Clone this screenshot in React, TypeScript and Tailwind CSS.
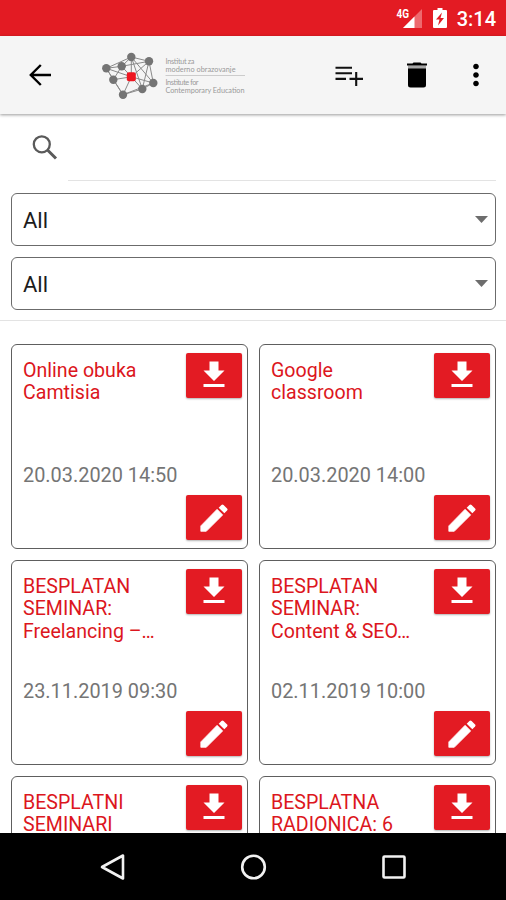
import React from 'react'
import { MdGetApp, MdMoreVert } from 'react-icons/md'

const seminars = [
  { title: ['Online obuka', 'Camtisia'], date: '20.03.2020 14:50' },
  { title: ['Google', 'classroom'], date: '20.03.2020 14:00' },
  { title: ['BESPLATAN', 'SEMINAR:', 'Freelancing –…'], date: '23.11.2019 09:30' },
  { title: ['BESPLATAN', 'SEMINAR:', 'Content & SEO…'], date: '02.11.2019 10:00' },
  { title: ['BESPLATNI', 'SEMINARI'], date: '' },
  { title: ['BESPLATNA', 'RADIONICA: 6'], date: '' },
]

const nodes = [
  [31.3, 10], [49, 14.3], [6.3, 21.3], [21.7, 19.3], [13.3, 32.7], [53.3, 36], [42.3, 42], [23, 47.7],
]

const links = [
  [0, 1], [0, 2], [0, 3], [2, 3], [2, 4], [3, 4], [4, 7], [7, 6], [6, 5], [5, 1], [7, 5], [0, 5], [1, 3], [2, 7], [0, 6], [1, 6],
]

const Logo = () => (
  <svg className='w-[150px] h-[56px] ml-[43px]' viewBox='0 0 150 56'>
    <g stroke='#8a8a8a' strokeWidth='1'>
      {links.map(([a, b], index: number) => (
        <line key={index} x1={nodes[a][0]} y1={nodes[a][1]} x2={nodes[b][0]} y2={nodes[b][1]} />
      ))}
      {nodes.map(([x, y], index: number) => (
        <line key={index} x1={x} y1={y} x2='31.3' y2='29.8' />
      ))}
    </g>
    {nodes.map(([x, y], index: number) => (
      <circle key={index} cx={x} cy={y} r='4.2' fill='#747474' />
    ))}
    <rect x='26.8' y='25.300' width='9' height='9' rx='2' fill='#ee1620' />
    <g fill='#9a9a9a' fontSize='7.3' fontFamily='Lato, sans-serif'>
      <text x='65.5' y='17.300' textLength='29'>Institut za</text>
      <text x='65.5' y='25.300' textLength='70'>moderno obrazovanje</text>
      <text x='65.5' y='37.700' textLength='33'>Institute for</text>
      <text x='65.5' y='46' textLength='79'>Contemporary Education</text>
    </g>
    <path d='M65.5 28.500H145' stroke='#cccccc' strokeWidth='1' />
  </svg>
)

const StatusBar = () => (
  <div className='flex items-center justify-end h-9 pr-[10px] bg-[#e31b23] text-white shrink-0'>
    <svg className='w-[27px] h-[22px]' viewBox='0 0 27 22'>
      <path d='M26 2V21H7z' fill='#fff' opacity='0.35' />
      <path d='M18.5 9.5V21H7z' fill='#fff' />
      <text x='0.5' y='11' fontSize='12.5' fontWeight='700' fontFamily='Roboto, sans-serif' fill='#fff' textLength='12.5' lengthAdjust='spacingAndGlyphs'>4G</text>
    </svg>
    <svg className='w-[14px] h-[22px] ml-[10px]' viewBox='0 0 14 22'>
      <path d='M4.5 1h5v2H13a1 1 0 0 1 1 1v16a1 1 0 0 1-1 1H1a1 1 0 0 1-1-1V4a1 1 0 0 1 1-1h3.500z' fill='#fff' />
      <path d='M9 5.500 3 12.500H6.500L5 18.500 11 11H7.500z' fill='#e31b23' />
    </svg>
    <span className='mt-0.5 ml-[10px] text-[20px] leading-9 font-medium'>3:14</span>
  </div>
)

const BackIcon = () => (
  <svg className='w-[34px] h-[34px] ml-[23px]' viewBox='0 0 34 34' fill='none' stroke='#000' strokeWidth='2.400'>
    <path d='M28 17H7.500M17.800 7 7.800 17l10 10' />
  </svg>
)

const AddIcon = () => (
  <svg className='w-[34px] h-[34px] ml-[82px]' viewBox='0 0 34 34' fill='none' stroke='#111' strokeWidth='2.100'>
    <path d='M3.500 9.800H20M3.500 15.300H20M3.500 20.900H14M17.500 20.900H31M24.200 14v14' />
  </svg>
)

const TrashIcon = () => (
  <svg className='w-[34px] h-[34px] ml-[34px]' viewBox='0 0 34 34'>
    <path d='M8 7.500h18v5H8z' fill='#a8a8a8' />
    <path d='M7 5.500h5.500L13.500 4.500h7l1 1H27V7.500H7zM8 10.500h18V27a2.500 2.500 0 0 1-2.500 2.500h-13A2.500 2.500 0 0 1 8 27z' fill='#000' />
  </svg>
)

const SearchIcon = () => (
  <svg className='w-[34px] h-[34px] mt-[17px]' viewBox='0 0 34 34' fill='none' stroke='#5a5a5a' strokeWidth='2.300'>
    <circle cx='13.800' cy='13.300' r='8' />
    <path d='M19.500 19 28 27.500' strokeWidth='3' />
  </svg>
)

const PencilIcon = () => (
  <svg className='w-9 h-9' viewBox='0 0 24 24' fill='#fff'>
    <path d='M3.200 17.250V20.900h3.650L17.810 9.940l-3.750-3.750z' stroke='#fff' strokeWidth='0.500' strokeLinejoin='round' />
    <path d='M20.710 7.040a1 1 0 0 0 0-1.410l-2.340-2.340a1 1 0 0 0-1.410 0l-1.830 1.830 3.750 3.750z' />
  </svg>
)

const Toolbar = () => (
  <div className='relative flex items-center h-[78px] bg-[#f5f5f5] shadow-[0_1px_3px_rgba(0,0,0,0.4)] text-black shrink-0'>
    <BackIcon />
    <Logo />
    <AddIcon />
    <TrashIcon />
    <MdMoreVert className='w-[34px] h-[34px] ml-[25px]' />
  </div>
)

const Dropdown = () => (
  <div className='flex items-center justify-between h-[53px] pl-[11px] pr-[7px] border border-[#6b6b6b] rounded-md text-[22px] text-[#1c1c1c]'>
    <span className='pt-0.5'>All</span>
    <svg className='w-[13px] h-[7px]' viewBox='0 0 13 7'>
      <path d='M0 0h13L6.500 7z' fill='#6d6d6d' />
    </svg>
  </div>
)

const SeminarCard = ({ item }: any) => (
  <div className='flex justify-between h-[205px] pl-[11px] pr-[5px] py-2 border border-[#5e5e5e] rounded-md'>
    <div className='flex flex-col whitespace-nowrap'>
      <div className='h-[111px] pt-[6.5px] text-[19.6px] leading-[22.5px] text-[#dc1620]'>
        {item.title.map((line: string) => (
          <p key={line}>{line}</p>
        ))}
      </div>
      <p className='text-[19.9px] leading-[24px] text-[#757575]'>{item.date}</p>
    </div>
    <div className='flex flex-col justify-between shrink-0 w-14 -ml-10'>
      <button className='flex items-center justify-center h-[45px] pb-[2px] rounded-[2px] bg-[#e31b23] text-white shadow-[0_1px_2px_rgba(0,0,0,0.3)]'>
        <MdGetApp className='w-9 h-9' />
      </button>
      <button className='flex items-center justify-center h-[45px] rounded-[2px] bg-[#e31b23] text-white shadow-[0_1px_2px_rgba(0,0,0,0.3)]'>
        <PencilIcon />
      </button>
    </div>
  </div>
)

const NavBar = () => (
  <div className='flex items-center justify-center gap-[112px] h-[67px] bg-black shrink-0'>
    <svg className='w-7 h-7' viewBox='0 0 28 28' fill='none' stroke='#f2f2f2' strokeWidth='2.600' strokeLinejoin='round'>
      <path d='M24 2.500v23L3 14z' />
    </svg>
    <svg className='w-7 h-7' viewBox='0 0 28 28' fill='none' stroke='#f2f2f2' strokeWidth='2.600'>
      <circle cx='14.500' cy='14' r='11.300' />
    </svg>
    <svg className='w-7 h-7' viewBox='0 0 28 28' fill='none' stroke='#f2f2f2' strokeWidth='2.600'>
      <rect x='4.500' y='3.500' width='21' height='21' rx='1' />
    </svg>
  </div>
)

export default function App() {
  return (
    <div className='flex flex-col w-[506px] h-[900px] overflow-hidden bg-white font-[Roboto,sans-serif]'>
      <StatusBar />
      <Toolbar />
      <div className='flex items-start h-[67px] pl-7 pr-[10px] shrink-0'>
        <SearchIcon />
        <div className='flex-1 h-[67px] ml-[6px] border-b border-[#e3e3e3]' />
      </div>
      <div className='flex flex-col gap-[11px] h-[140px] pt-3 pl-[11px] pr-[10px] border-b border-[#e3e3e3] shrink-0'>
        <Dropdown />
        <Dropdown />
      </div>
      <div className='flex-1 min-h-0 overflow-hidden'>
        <div className='grid grid-cols-2 gap-[11px] pt-[23px] pl-[11px] pr-[10px]'>
          {seminars.map((item: any, index: number) => (
            <SeminarCard key={index} item={item} />
          ))}
        </div>
      </div>
      <NavBar />
    </div>
  )
}
